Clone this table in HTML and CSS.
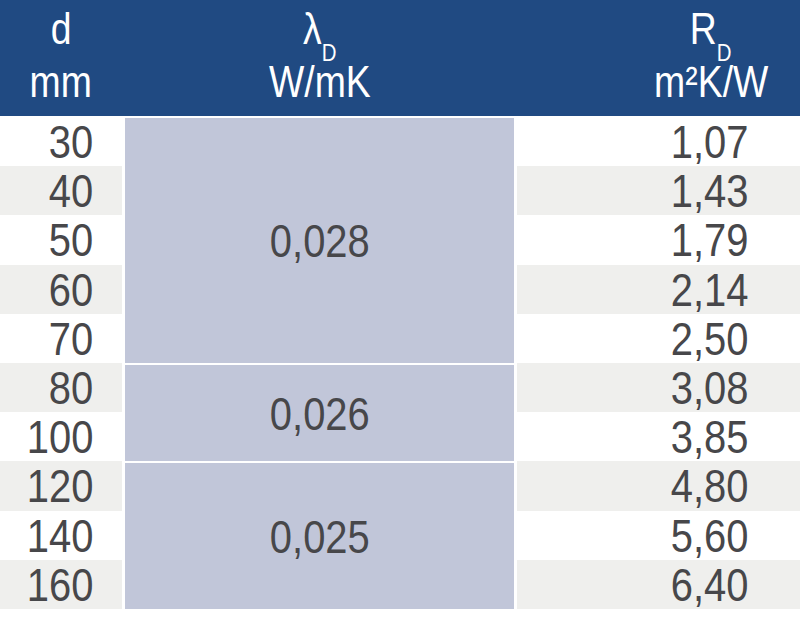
FILE: index.html
```html
<!DOCTYPE html>
<html>
<head>
<meta charset="utf-8">
<link rel="stylesheet" href="styles.css">
</head>
<body>
<div class="head">
  <div class="h hd">
    <div class="line"><span class="t">d</span></div>
    <div class="line"><span class="t">mm</span></div>
  </div>
  <div class="h hm">
    <div class="line"><span class="t">λ<span class="sub">D</span></span></div>
    <div class="line"><span class="t">W/mK</span></div>
  </div>
  <div class="h hr">
    <div class="line"><span class="t">R<span class="sub">D</span></span></div>
    <div class="line"><span class="t">m²K/W</span></div>
  </div>
</div>
<div class="table">
  <div class="d"><span class="t">30</span></div>
  <div class="m m1"><span class="t">0,028</span></div>
  <div class="r"><span class="t">1,07</span></div>
  <div class="d alt"><span class="t">40</span></div>
  <div class="r alt"><span class="t">1,43</span></div>
  <div class="d"><span class="t">50</span></div>
  <div class="r"><span class="t">1,79</span></div>
  <div class="d alt"><span class="t">60</span></div>
  <div class="r alt"><span class="t">2,14</span></div>
  <div class="d"><span class="t">70</span></div>
  <div class="r"><span class="t">2,50</span></div>
  <div class="d alt"><span class="t">80</span></div>
  <div class="m m2"><span class="t">0,026</span></div>
  <div class="r alt"><span class="t">3,08</span></div>
  <div class="d"><span class="t">100</span></div>
  <div class="r"><span class="t">3,85</span></div>
  <div class="d alt"><span class="t">120</span></div>
  <div class="m m3"><span class="t">0,025</span></div>
  <div class="r alt"><span class="t">4,80</span></div>
  <div class="d"><span class="t">140</span></div>
  <div class="r"><span class="t">5,60</span></div>
  <div class="d alt"><span class="t">160</span></div>
  <div class="r alt"><span class="t">6,40</span></div>
</div>
</body>
</html>
```
FILE: styles.css
```css
html, body {
  margin: 0;
  padding: 0;
  background: #ffffff;
}
body {
  font-family: "Liberation Sans", Arial, sans-serif;
  width: 800px;
  height: 620px;
  overflow: hidden;
}
.t {
  display: inline-block;
  transform: scaleX(0.85);
  white-space: nowrap;
}
.head {
  display: grid;
  grid-template-columns: 122px 389px 283px;
  column-gap: 3px;
  height: 116px;
  background: #204a82;
  color: #ffffff;
  font-size: 44px;
  box-sizing: border-box;
  padding-top: 2px;
}
.h .line {
  height: 53px;
  line-height: 53px;
}
.hd, .hm {
  text-align: center;
}
.hr {
  text-align: center;
  padding-left: 105px;
}
.sub {
  font-size: 24px;
  line-height: 0;
  vertical-align: -17px;
}
.table {
  display: grid;
  grid-template-columns: 122px 389px 283px;
  grid-template-rows: repeat(10, 49.2px);
  column-gap: 3px;
  margin-top: 1px;
  color: #47474a;
  font-size: 47px;
}
.d, .r {
  display: flex;
  align-items: center;
  justify-content: flex-end;
  background: #ffffff;
}
.d {
  grid-column: 1;
  padding-right: 29px;
}
.r {
  grid-column: 3;
  padding-right: 52px;
}
.d .t, .r .t {
  transform-origin: right center;
}
.alt {
  background: #efefed;
}
.m {
  grid-column: 2;
  background: #c1c6d9;
  display: flex;
  align-items: center;
  justify-content: center;
  border-top: 2px solid #ffffff;
}
.m1 {
  grid-row: span 5;
  border-top-width: 1px;
}
.m2 {
  grid-row: span 2;
}
.m3 {
  grid-row: span 3;
}
```
